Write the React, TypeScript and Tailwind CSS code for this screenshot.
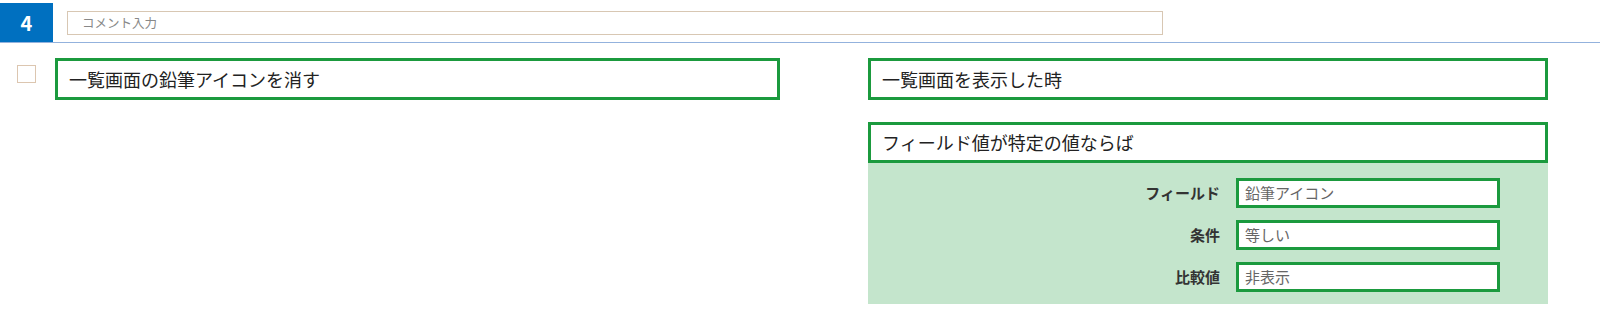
const font = "font-['Noto_Sans_CJK_JP','Noto_Sans',sans-serif]";

const conditions = [
  { label: 'フィールド', value: '鉛筆アイコン' },
  { label: '条件', value: '等しい' },
  { label: '比較値', value: '非表示' },
];

function GreenBox({ text, className = '' }: { text: string; className?: string }) {
  return (
    <div
      className={`flex items-center border-[3px] border-[#1b9a3e] bg-white pl-[11px] text-[18px] text-[#222] ${className}`}
    >
      {text}
    </div>
  );
}

export default function App() {
  return (
    <div className={`w-[1600px] h-[316px] bg-white ${font}`}>
      {/* header */}
      <div className="flex items-start pt-[3px] border-b border-[#93b2dd]">
        <div className="flex h-[39px] w-[53px] items-center justify-center bg-[#0070c0] text-[20px] font-bold text-white">
          4
        </div>
        <div className="ml-[14px] mt-[8px] flex h-[24px] w-[1096px] items-center border border-[#d8c7b3] pl-[14px] text-[12.5px] text-[#888]">
          コメント入力
        </div>
      </div>

      {/* body */}
      <div className="flex items-start pt-[15px]">
        <div className="ml-[17px] mt-[7px] h-[18px] w-[19px] border border-[#dcc6b0] bg-white" />
        <GreenBox text="一覧画面の鉛筆アイコンを消す" className="ml-[19px] h-[42px] w-[725px]" />

        <div className="ml-[88px] flex w-[680px] flex-col">
          <GreenBox text="一覧画面を表示した時" className="h-[42px]" />
          <GreenBox text="フィールド値が特定の値ならば" className="mt-[22px] h-[41px]" />
          <div className="flex h-[141px] flex-col gap-[12px] bg-[#c4e5cc] pt-[15px]">
            {conditions.map((c) => (
              <div key={c.label} className="flex items-center">
                <div className="w-[352px] text-right text-[15px] font-bold text-[#333]">{c.label}</div>
                <div className="ml-[16px] flex h-[30px] w-[264px] items-center border-[3px] border-[#1b9a3e] bg-white pl-[6px] text-[15px] text-[#666]">
                  {c.value}
                </div>
              </div>
            ))}
          </div>
        </div>
      </div>
    </div>
  );
}
